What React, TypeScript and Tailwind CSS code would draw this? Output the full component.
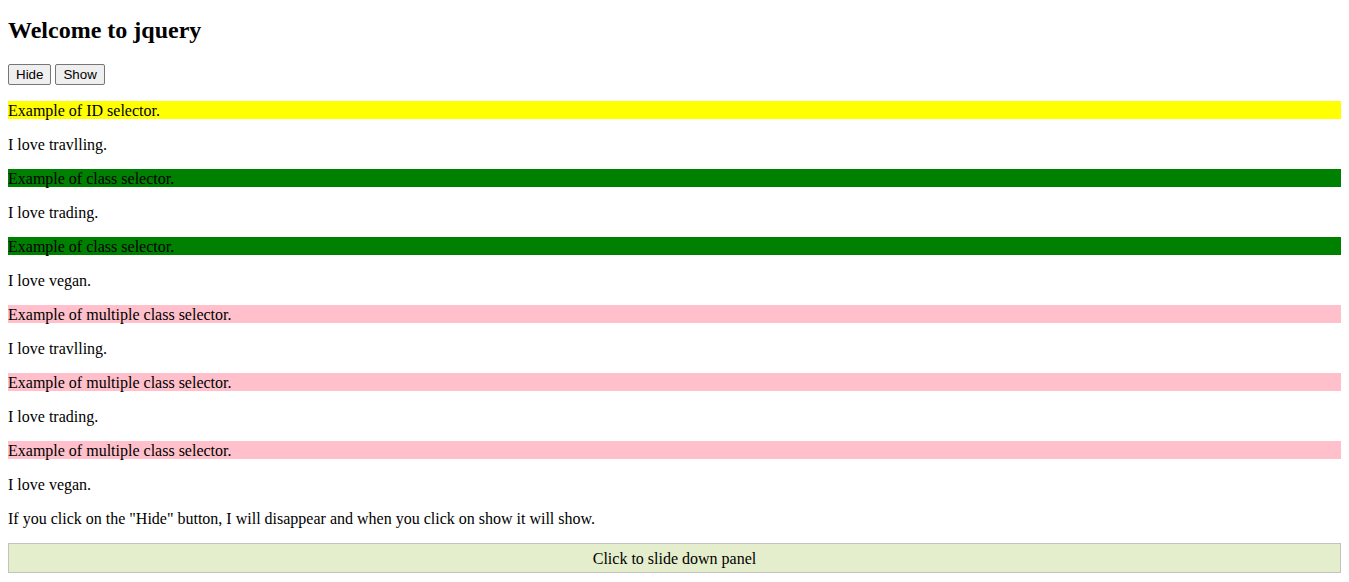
import React from 'react';

const rows: { text: string; bg?: string }[] = [
  { text: 'Example of ID selector.', bg: 'bg-[#ffff00]' },
  { text: 'I love travlling.' },
  { text: 'Example of class selector.', bg: 'bg-[#008000]' },
  { text: 'I love trading.' },
  { text: 'Example of class selector.', bg: 'bg-[#008000]' },
  { text: 'I love vegan.' },
  { text: 'Example of multiple class selector.', bg: 'bg-[#ffc0cb]' },
  { text: 'I love travlling.' },
  { text: 'Example of multiple class selector.', bg: 'bg-[#ffc0cb]' },
  { text: 'I love trading.' },
  { text: 'Example of multiple class selector.', bg: 'bg-[#ffc0cb]' },
  { text: 'I love vegan.' },
  { text: 'If you click on the "Hide" button, I will disappear and when you click on show it will show.' },
];

const btn =
  "mt-px h-[21px] rounded-[2px] border border-[#767676] bg-[#efefef] px-[7px] font-['Liberation_Sans',Arial,sans-serif] text-[13.33px] leading-[15px] text-black";

export default function App() {
  return (
    <div className="min-h-[582px] bg-white px-2 pt-[16px] pb-2 font-['Times_New_Roman','Liberation_Serif',serif] text-[16px] text-black">
      <h2 className="m-0 text-[24px] font-bold leading-[28px]">Welcome to jquery</h2>

      <div className="mt-[19px] flex h-[22px] items-start gap-[4px]">
        <button className={btn}>Hide</button>
        <button className={btn}>Show</button>
      </div>

      {rows.map((r, i) => (
        <p key={i} className={`mt-[16px] pt-px leading-[17px] ${r.bg ?? ''}`}>
          {r.text}
        </p>
      ))}

      <div className="mt-[16px] border border-[#c3c3c3] bg-[#e5eecc] px-[5px] pt-[6px] pb-[4px] text-center leading-[18px]">
        Click to slide down panel
      </div>
    </div>
  );
}
